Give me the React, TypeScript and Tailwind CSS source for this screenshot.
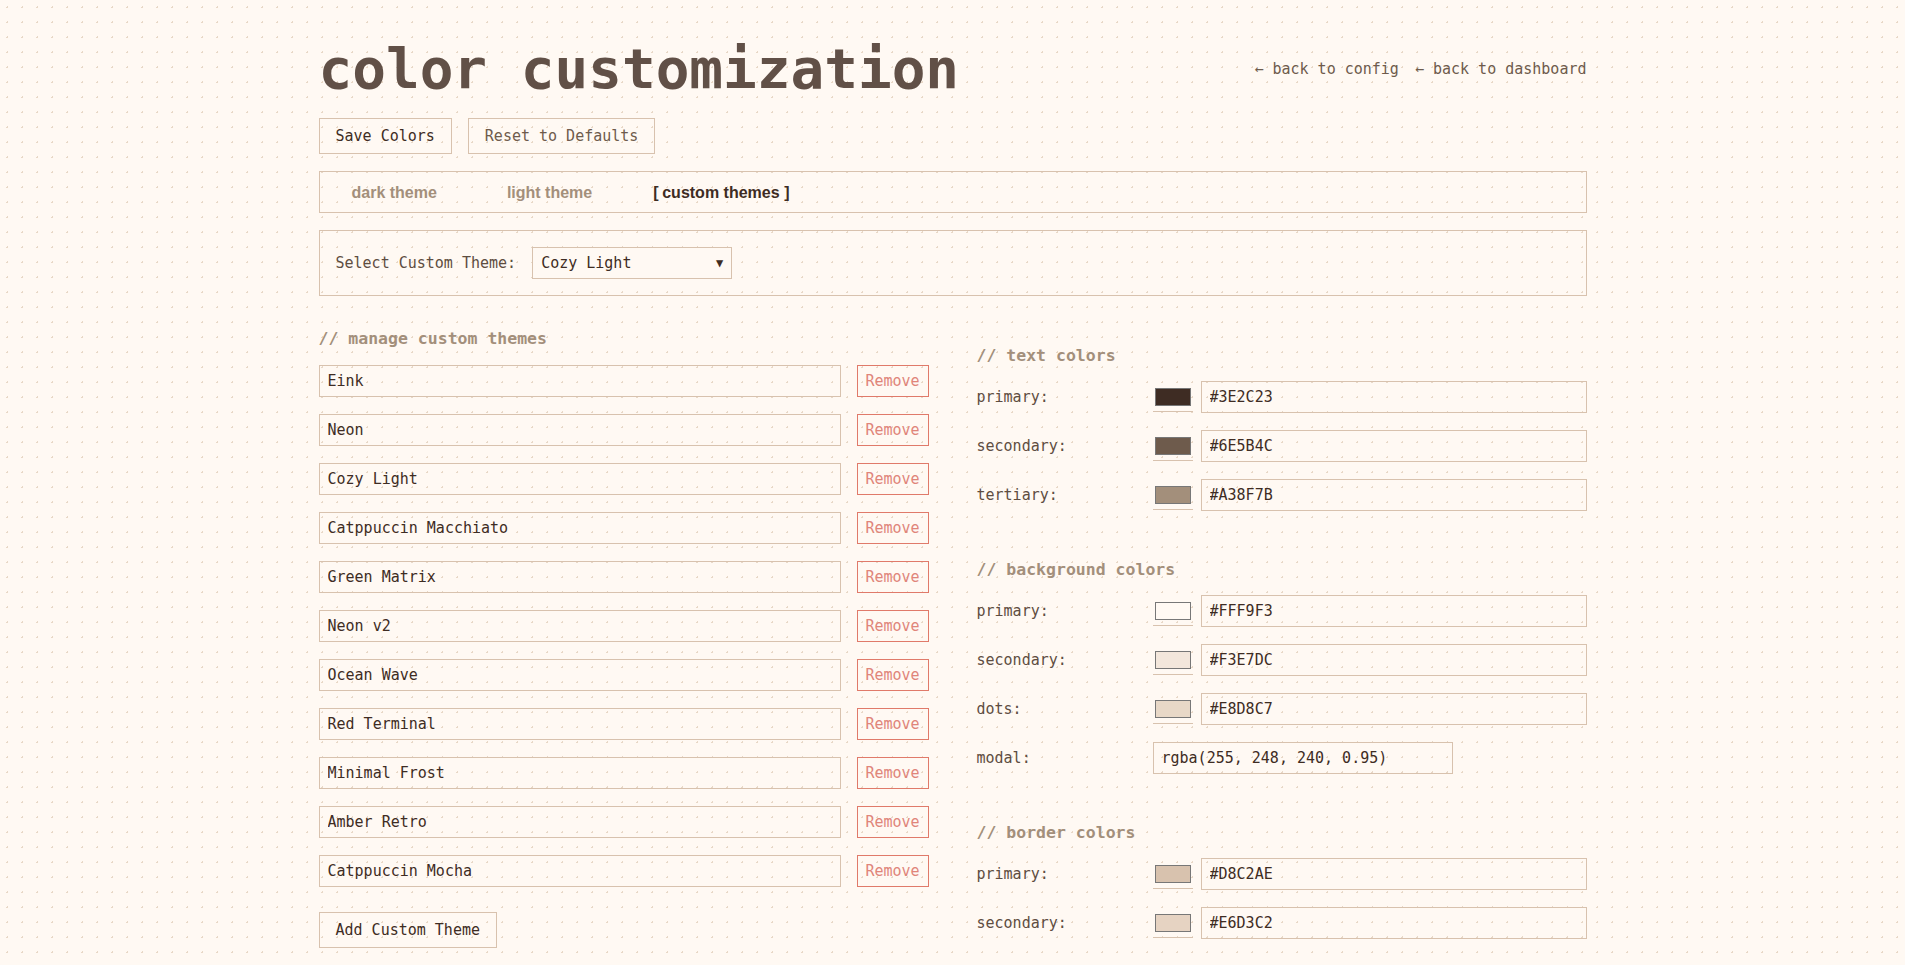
import { useState } from "react";

const themes = [
  "Eink",
  "Neon",
  "Cozy Light",
  "Catppuccin Macchiato",
  "Green Matrix",
  "Neon v2",
  "Ocean Wave",
  "Red Terminal",
  "Minimal Frost",
  "Amber Retro",
  "Catppuccin Mocha",
];

type ColorRow = { label: string; value: string; swatch?: boolean };

const sections: { title: string; rows: ColorRow[] }[] = [
  {
    title: "// text colors",
    rows: [
      { label: "primary:", value: "#3E2C23", swatch: true },
      { label: "secondary:", value: "#6E5B4C", swatch: true },
      { label: "tertiary:", value: "#A38F7B", swatch: true },
    ],
  },
  {
    title: "// background colors",
    rows: [
      { label: "primary:", value: "#FFF9F3", swatch: true },
      { label: "secondary:", value: "#F3E7DC", swatch: true },
      { label: "dots:", value: "#E8D8C7", swatch: true },
      { label: "modal:", value: "rgba(255, 248, 240, 0.95)" },
    ],
  },
  {
    title: "// border colors",
    rows: [
      { label: "primary:", value: "#D8C2AE", swatch: true },
      { label: "secondary:", value: "#E6D3C2", swatch: true },
    ],
  },
];

function Swatch({ color }: { color: string }) {
  return (
    <div className="w-10 h-[30px] shrink-0 flex items-center justify-center border-b border-[#d8c2ae]">
      <div className="w-9 h-[18px] border border-[#777]" style={{ backgroundColor: color }} />
    </div>
  );
}

export default function App() {
  const [tab, setTab] = useState("custom");
  const [selected, setSelected] = useState("Cozy Light");

  const tabs = [
    { id: "dark", label: "dark theme" },
    { id: "light", label: "light theme" },
    { id: "custom", label: "custom themes" },
  ];

  return (
    <div className="min-h-screen bg-[#fff9f3] bg-[radial-gradient(circle,#e8d8c7_1px,transparent_1px)] bg-[length:15px_15px] text-[15px] text-[#3e2c23] font-['DejaVu_Sans_Mono',monospace]">
      <div className="w-[1268px] mx-auto pt-[41px] pb-10">
        <header className="flex items-center justify-between">
          <h1 className="text-[56px] leading-none font-bold text-[#615047]">color customization</h1>
          <nav className="flex gap-4 text-[#6e5b4c]">
            <a href="#">← back to config</a>
            <a href="#">← back to dashboard</a>
          </nav>
        </header>

        <div className="mt-[21px] flex gap-4">
          <button className="h-9 px-4 border border-[#d8c2ae] text-[#3e2c23]">Save Colors</button>
          <button className="h-9 px-4 border border-[#d8c2ae] text-[#6e5b4c]">Reset to Defaults</button>
        </div>

        <div className="mt-[17px] h-[42px] border border-[#d8c2ae] flex items-center gap-[6px] pt-px">
          {tabs.map((t) => (
            <button
              key={t.id}
              onClick={() => setTab(t.id)}
              className={
                tab === t.id
                  ? "px-8 font-['Liberation_Sans',Arial,sans-serif] font-bold text-base text-[#3e2c23]"
                  : "px-8 font-['Liberation_Sans',Arial,sans-serif] font-bold text-base text-[#a38f7b]"
              }
            >
              <span className="relative">
                {tab === t.id && <span className="absolute -left-[9px]">[</span>}
                {t.label}
                {tab === t.id && <span className="absolute -right-[10px]">]</span>}
              </span>
            </button>
          ))}
        </div>

        <div className="mt-[17px] border border-[#d8c2ae] p-4 flex items-center gap-4">
          <label className="text-[#5e4d41]">Select Custom Theme:</label>
          <div className="relative">
            <select
              value={selected}
              onChange={(e) => setSelected(e.target.value)}
              className="appearance-none w-[200px] h-8 pl-2 pr-6 bg-[#fff9f3] border border-[#d8c2ae] text-[#3e2c23] outline-none"
            >
              {themes.map((t) => (
                <option key={t}>{t}</option>
              ))}
            </select>
            <span className="pointer-events-none absolute right-[9px] top-[7px] text-[12px] text-[#3e2c23]">▼</span>
          </div>
        </div>

        <div className="mt-8 grid grid-cols-2 gap-12">
          <div>
            <h2 className="text-[16.5px] font-bold text-[#a38f7b] leading-[22px] mb-[15px]">// manage custom themes</h2>
            <div className="flex flex-col gap-[17px]">
              {themes.map((t) => (
                <div key={t} className="flex items-center gap-4">
                  <input
                    defaultValue={t}
                    className="flex-1 h-8 px-2 bg-transparent border border-[#d8c2ae] text-[#3e2c23] outline-none"
                  />
                  <button className="w-[72px] h-8 border border-[#e07a6a] text-[#e0857a]">Remove</button>
                </div>
              ))}
            </div>
            <button className="mt-[25px] h-9 px-4 border border-[#d8c2ae] text-[#3e2c23]">Add Custom Theme</button>
          </div>

          <div className="pt-[17px] flex flex-col gap-12">
            {sections.map((s) => (
              <section key={s.title}>
                <h2 className="text-[16.5px] font-bold text-[#a38f7b] leading-[22px] mb-[14px]">{s.title}</h2>
                <div className="flex flex-col gap-[17px]">
                  {s.rows.map((r) => (
                    <div key={r.label} className="flex items-center">
                      <label className="w-[176px] shrink-0 text-[#5e4d41]">{r.label}</label>
                      {r.swatch ? (
                        <>
                          <Swatch color={r.value} />
                          <input
                            defaultValue={r.value}
                            className="ml-2 flex-1 h-8 px-2 bg-transparent border border-[#d8c2ae] text-[#3e2c23] outline-none"
                          />
                        </>
                      ) : (
                        <input
                          defaultValue={r.value}
                          className="w-[300px] h-8 px-2 bg-transparent border border-[#d8c2ae] text-[#3e2c23] outline-none"
                        />
                      )}
                    </div>
                  ))}
                </div>
              </section>
            ))}
          </div>
        </div>
      </div>
    </div>
  );
}
